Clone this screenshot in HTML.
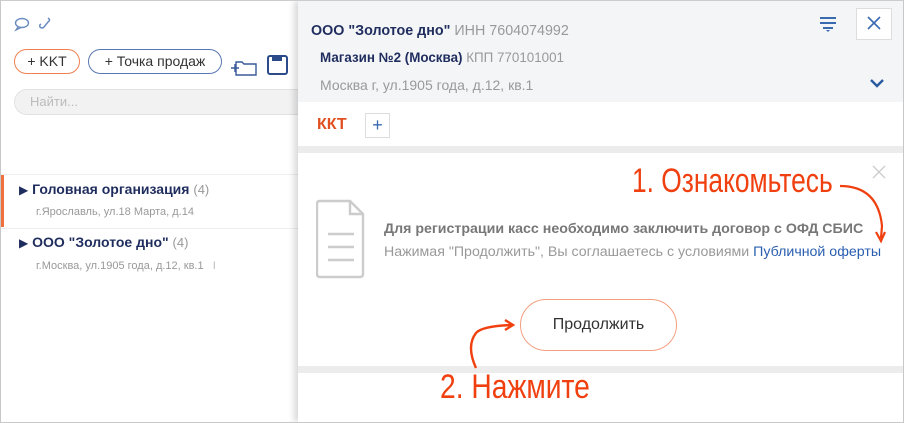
<!DOCTYPE html>
<html><head><meta charset="utf-8"><style>
*{margin:0;padding:0;box-sizing:border-box}
body{width:904px;height:423px;overflow:hidden;background:#fff;font-family:"Liberation Sans","DejaVu Sans",sans-serif;position:relative}
.frame{position:absolute;left:0;top:0;width:904px;height:423px;border:1px solid #c8c8c8;border-top-color:#ccc}
.abs{position:absolute;white-space:nowrap}
.left{position:absolute;left:1px;top:1px;width:297px;height:421px;background:#fff}
.btn{position:absolute;height:25px;border-radius:13px;font-size:14px;line-height:23px;text-align:center;color:#333}
.right{position:absolute;left:298px;top:1px;width:605px;height:421px;background:#fff;box-shadow:-4px 0 6px rgba(0,0,0,.15)}
.hand{position:absolute;white-space:nowrap;font-size:34px;color:#f04010;transform-origin:0 0}
</style></head><body>
<div class="left">
  <svg class="abs" style="left:13px;top:15px" width="40" height="16" viewBox="0 0 40 16">
    <ellipse cx="8" cy="7" rx="6.5" ry="4.5" fill="none" stroke="#6a8bc0" stroke-width="1.4"/>
    <path d="M4 11 L2 14 L7 11.5" fill="none" stroke="#6a8bc0" stroke-width="1.3"/>
    <path d="M34 2 q3 2 0 4 l-4 5 q-2 2 -4 0 q-1 -2 1 -3" fill="none" stroke="#6a8bc0" stroke-width="1.5"/>
  </svg>
  <div class="btn" style="left:13px;top:48px;width:66px;border:1.5px solid #f08050">+ KKT</div>
  <div class="btn" style="left:87px;top:48px;width:134px;border:1.5px solid #5a78b0">+ Точка продаж</div>
  <svg class="abs" style="left:229px;top:53px" width="60" height="22" viewBox="0 0 60 22">
    <path d="M6 8 h6 l2 2 h12 v11 h-20 z" fill="none" stroke="#3a5a9a" stroke-width="1.4"/>
    <path d="M1 14 h8 M5 10 v8" stroke="#3a5a9a" stroke-width="1.4"/>
    <rect x="38" y="2" width="19" height="18" rx="2" fill="none" stroke="#2a4a8a" stroke-width="2"/>
    <rect x="42" y="2" width="10" height="5" fill="#2a4a8a"/>
  </svg>
  <div class="abs" style="left:13px;top:88px;width:284px;height:26px;background:#f2f2f2;border:1px solid #e2e2e2;border-right:none;border-radius:13px 0 0 13px;font-size:13px;color:#bbb;line-height:24px;padding-left:15px">Найти...</div>
  <div class="abs" style="left:0;top:173px;width:297px;height:1px;background:#eee"></div>
  <div class="abs" style="left:0;top:174px;width:3px;height:52px;background:#f07040"></div>
  <div class="abs" style="left:18px;top:180px;font-size:14px;color:#1f2d5e;font-weight:bold"><span style="font-size:12px">&#9654;</span> Головная организация <span style="font-weight:normal;color:#999;font-size:13px">(4)</span></div>
  <div class="abs" style="left:35px;top:205px;font-size:11px;color:#999">г.Ярославль, ул.18 Марта, д.14</div>
  <div class="abs" style="left:0;top:227px;width:297px;height:1px;background:#eee"></div>
  <div class="abs" style="left:18px;top:233px;font-size:14px;color:#1f2d5e;font-weight:bold"><span style="font-size:12px">&#9654;</span> ООО "Золотое дно" <span style="font-weight:normal;color:#999;font-size:13px">(4)</span></div>
  <div class="abs" style="left:35px;top:259px;font-size:11px;color:#999">г.Москва, ул.1905 года, д.12, кв.1 &nbsp;&nbsp;<span style="color:#bbb">I</span></div>
</div>
<div class="right">
  <div class="abs" style="left:0;top:0;width:605px;height:101px;background:#f4f5f7"></div>
  <div class="abs" style="left:13px;top:22px;font-size:14.3px;color:#1f2d5e;font-weight:bold">ООО "Золотое дно" <span style="font-weight:normal;color:#999">ИНН 7604074992</span></div>
  <div class="abs" style="left:22px;top:49px;font-size:13.4px;color:#1f2d5e;font-weight:bold">Магазин №2 (Москва) <span style="font-weight:normal;color:#999">КПП 770101001</span></div>
  <div class="abs" style="left:22px;top:76px;font-size:14px;color:#999">Москва г, ул.1905 года, д.12, кв.1</div>
  <svg class="abs" style="left:520px;top:14px" width="20" height="18" viewBox="0 0 20 18">
    <path d="M2 3h16M2 8h16M5 13h10" stroke="#3a6ab0" stroke-width="2"/><path d="M8 15h4l-2 2z" fill="#3a6ab0"/>
  </svg>
  <div class="abs" style="left:558px;top:7px;width:36px;height:32px;background:#fff;border:1px solid #ddd"></div>
  <svg class="abs" style="left:568px;top:14px" width="16" height="16" viewBox="0 0 16 16"><path d="M2 2L14 14M14 2L2 14" stroke="#3a6ab0" stroke-width="1.6"/></svg>
  <svg class="abs" style="left:571px;top:77px" width="16" height="10" viewBox="0 0 16 10"><path d="M2 2l6 6 6-6" fill="none" stroke="#2a5aa0" stroke-width="2.4"/></svg>
  <div class="abs" style="left:19px;top:115px;font-size:16px;color:#e05020;font-weight:bold">ККТ</div>
  <div class="abs" style="left:67px;top:112px;width:25px;height:25px;border:1px solid #ddd;background:#fff;color:#3a6ab0;font-size:18px;line-height:22px;text-align:center">+</div>
  <div class="abs" style="left:0;top:145px;width:605px;height:7px;background:#ececec"></div>
  <svg class="abs" style="left:574px;top:164px" width="14" height="14" viewBox="0 0 14 14"><path d="M1 1L13 13M13 1L1 13" stroke="#ccc" stroke-width="1.3"/></svg>
  <svg class="abs" style="left:18px;top:198px" width="50" height="80" viewBox="0 0 50 80">
    <path d="M4 2h30l13 13v60q0 3-3 3h-40q-3 0-3-3v-70q0-3 3-3z" fill="none" stroke="#ccc" stroke-width="2.4"/>
    <path d="M34 2v13h13" fill="none" stroke="#ccc" stroke-width="2.4"/>
    <path d="M12 35h26M12 48h26M12 61h26" stroke="#ccc" stroke-width="2.4"/>
  </svg>
  <div class="abs" style="left:86px;top:220px;font-size:14.2px;color:#777;font-weight:bold">Для регистрации касс необходимо заключить договор с ОФД СБИС</div>
  <div class="abs" style="left:86px;top:243px;font-size:14.2px;color:#999">Нажимая "Продолжить", Вы соглашаетесь с условиями <span style="color:#2a5fb0">Публичной оферты</span></div>
  <div class="abs" style="left:222px;top:298px;width:157px;height:52px;border:1.5px solid #f4a080;border-radius:26px;font-size:16px;color:#333;text-align:center;line-height:49px">Продолжить</div>
  <div class="abs" style="left:0;top:365px;width:605px;height:7px;background:#ececec"></div>
  <div class="hand" style="left:334px;top:161px;transform:scaleX(0.775)">1. Ознакомьтесь</div>
  <div class="hand" style="left:142px;top:367px;transform:scaleX(0.83)">2. Нажмите</div>
  <svg class="abs" style="left:0;top:0" width="605" height="421" viewBox="0 0 605 421">
    <path d="M542 185 q38 0 42 40 l-1 12" fill="none" stroke="#f04010" stroke-width="2.2"/>
    <path d="M578 231 l5 9 l4-9" fill="none" stroke="#f04010" stroke-width="2.2"/>
    <path d="M178 367 q-10-22 0-35 q6-7 36-8" fill="none" stroke="#f04010" stroke-width="2.4"/>
    <path d="M207 319 l8 5 l-8 5" fill="none" stroke="#f04010" stroke-width="2.4"/>
  </svg>
</div>
<div class="frame"></div>
</body></html>
